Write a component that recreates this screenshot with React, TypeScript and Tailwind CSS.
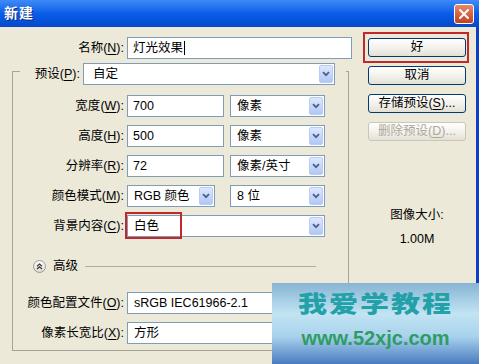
import type { ReactNode } from "react";

const FONT = "font-['Liberation_Sans','Noto_Sans_CJK_SC',sans-serif]";

function Key({ t, k }: { t: string; k: string }) {
  return (
    <>
      {t}(<span className="underline underline-offset-2">{k}</span>):
    </>
  );
}

function Chevron() {
  return (
    <svg width="8" height="6" viewBox="0 0 8 6">
      <path d="M1 1.2 L4 4.2 L7 1.2" fill="none" stroke="#4d6185" strokeWidth="1.8" />
    </svg>
  );
}

function Field({ children, className }: { children: ReactNode; className: string }) {
  return (
    <div className={`flex h-[22px] items-center border border-[#7f9db9] bg-white pl-[5px] ${className}`}>
      {children}
    </div>
  );
}

function Combo({ value, className }: { value: string; className: string }) {
  return (
    <div className={`flex h-[22px] items-stretch border border-[#7f9db9] bg-white p-[1px] ${className}`}>
      <span className="flex flex-1 items-center pl-[5px]">{value}</span>
      <span className="flex w-[14px] items-center justify-center rounded-[2px] border border-[#b9ccf5] bg-gradient-to-b from-[#dde8fe] to-[#b0c7f6]">
        <Chevron />
      </span>
    </div>
  );
}

function Row({ label, children, className = "" }: { label: ReactNode; children: ReactNode; className?: string }) {
  return (
    <div className={`flex h-[30px] items-center ${className}`}>
      <span className="w-[111px] text-right">{label}</span>
      <div className="ml-[3px] flex items-center gap-[6px]">{children}</div>
    </div>
  );
}

function XpButton({ children, disabled }: { children: ReactNode; disabled?: boolean }) {
  return (
    <div
      className={`flex h-[19px] w-[98px] items-center justify-center rounded-[3px] border bg-gradient-to-b from-white via-[#f3f2ec] to-[#e3e1d6] ${
        disabled ? "border-[#c9c7ba] text-[#aca899]" : "border-[#003c74] text-black"
      }`}
    >
      {children}
    </div>
  );
}

export default function App() {
  return (
    <div className={`relative h-[364px] w-[479px] overflow-hidden bg-[#ece9d8] text-[12.5px] text-black ${FONT}`}>
      {/* Title bar */}
      <div className="flex h-[27px] items-center justify-between bg-gradient-to-b from-[#3d8af7] via-[#0a5de8] to-[#0548cc] pl-[4px] pr-[5px]">
        <span className="text-[14px] font-bold tracking-[1px] text-white [text-shadow:1px_1px_0_#0a2a80]">新建</span>
        <div className="flex h-[20px] w-[20px] items-center justify-center rounded-[3px] border border-white bg-gradient-to-b from-[#e8896a] to-[#c23f1c]">
          <svg width="12" height="12" viewBox="0 0 12 12">
            <path d="M2 2 L10 10 M10 2 L2 10" stroke="white" strokeWidth="2" strokeLinecap="round" />
          </svg>
        </div>
      </div>

      {/* Body */}
      <div className="flex h-[337px] border-r-[3px] border-[#0b3fc6] pt-[10px]">
        {/* Left column */}
        <div className="w-[355px]">
          <div className="flex h-[22px] items-center">
            <span className="w-[124px] text-right">
              <Key t="名称" k="N" />
            </span>
            <Field className="ml-[3px] w-[225px]">
              灯光效果<span className="ml-[1px] h-[14px] w-px bg-black" />
            </Field>
          </div>

          <fieldset className="ml-[12px] mt-[-2px] w-[337px] border border-[#a5a39a] pb-[2px]">
            <legend className="ml-[7px] pl-[13px] pr-[11px] pt-[6px]">
              <div className="flex items-center">
                <span className="w-[47px] text-right">
                  <Key t="预设" k="P" />
                </span>
                <Combo value="自定" className="ml-[3px] w-[252px] pl-[4px]" />
              </div>
            </legend>

            <div className="mt-[6px]">
              <Row label={<Key t="宽度" k="W" />}>
                <Field className="w-[97px]">700</Field>
                <Combo value="像素" className="w-[95px]" />
              </Row>
              <Row label={<Key t="高度" k="H" />}>
                <Field className="w-[97px]">500</Field>
                <Combo value="像素" className="w-[95px]" />
              </Row>
              <Row label={<Key t="分辨率" k="R" />}>
                <Field className="w-[97px]">72</Field>
                <Combo value="像素/英寸" className="w-[95px]" />
              </Row>
              <Row label={<Key t="颜色模式" k="M" />}>
                <Combo value="RGB 颜色" className="h-[21px] w-[88px]" />
                <Combo value="8 位" className="ml-[9px] h-[21px] w-[95px]" />
              </Row>
              <Row label={<Key t="背景内容" k="C" />}>
                <div className="relative">
                  <Combo value="白色" className="h-[21px] w-[198px]" />
                  <div className="absolute left-[-2px] top-[-3px] h-[27px] w-[57px] border-2 border-[#c0282c]" />
                </div>
              </Row>
            </div>

            <div className="mt-[10px] flex h-[30px] items-center pl-[20px] pr-[32px]">
              <span className="flex h-[13px] w-[13px] items-center justify-center rounded-full border border-[#9a9a90] bg-gradient-to-b from-white to-[#dcdad0]">
                <svg width="7" height="7" viewBox="0 0 7 7">
                  <path d="M1 3.2 L3.5 1 L6 3.2 M1 6 L3.5 3.8 L6 6" fill="none" stroke="#3a3a3a" strokeWidth="1.2" />
                </svg>
              </span>
              <span className="ml-[7px]">高级</span>
              <span className="ml-[7px] h-px flex-1 bg-[#b0aea2]" />
            </div>

            <Row label={<Key t="颜色配置文件" k="O" />} className="mt-[7px]">
              <Combo value="sRGB IEC61966-2.1" className="h-[20px] w-[208px]" />
            </Row>
            <Row label={<Key t="像素长宽比" k="X" />}>
              <Combo value="方形" className="h-[21px] w-[208px]" />
            </Row>
          </fieldset>
        </div>

        {/* Right column */}
        <div className="ml-[13px] flex w-[98px] flex-col pt-[1px]">
          <div className="relative">
            <XpButton>好</XpButton>
            <div className="absolute left-[-5px] top-[-6px] h-[31px] w-[106px] border-2 border-[#c0282c]" />
          </div>
          <div className="mt-[9px]">
            <XpButton>取消</XpButton>
          </div>
          <div className="mt-[9px]">
            <XpButton>
              存储预设(<span className="underline underline-offset-2">S</span>)...
            </XpButton>
          </div>
          <div className="mt-[9px]">
            <XpButton disabled>
              删除预设(<span className="underline underline-offset-2">D</span>)...
            </XpButton>
          </div>
          <div className="mt-[66px] text-center leading-[16px]">图像大小:</div>
          <div className="mt-[8px] text-center leading-[16px]">1.00M</div>
        </div>
      </div>

      {/* Watermark */}
      <div className="absolute left-[272px] top-[283px] flex h-[81px] w-[207px] flex-col items-center bg-[linear-gradient(180deg,#86b4d4_0%,#c2e4f3_38%,#a8d2ec_66%,#4a7bc0_100%)] pt-[8px]">
        <span className="origin-top scale-y-[0.8] text-[29px] font-black leading-[32px] tracking-[2px] text-[#22a2a8]">
          我爱学教程
        </span>
        <span className="mt-[4px] text-[20px] font-bold leading-[22px] text-[#2f9c64]">www.52xjc.com</span>
      </div>
    </div>
  );
}
